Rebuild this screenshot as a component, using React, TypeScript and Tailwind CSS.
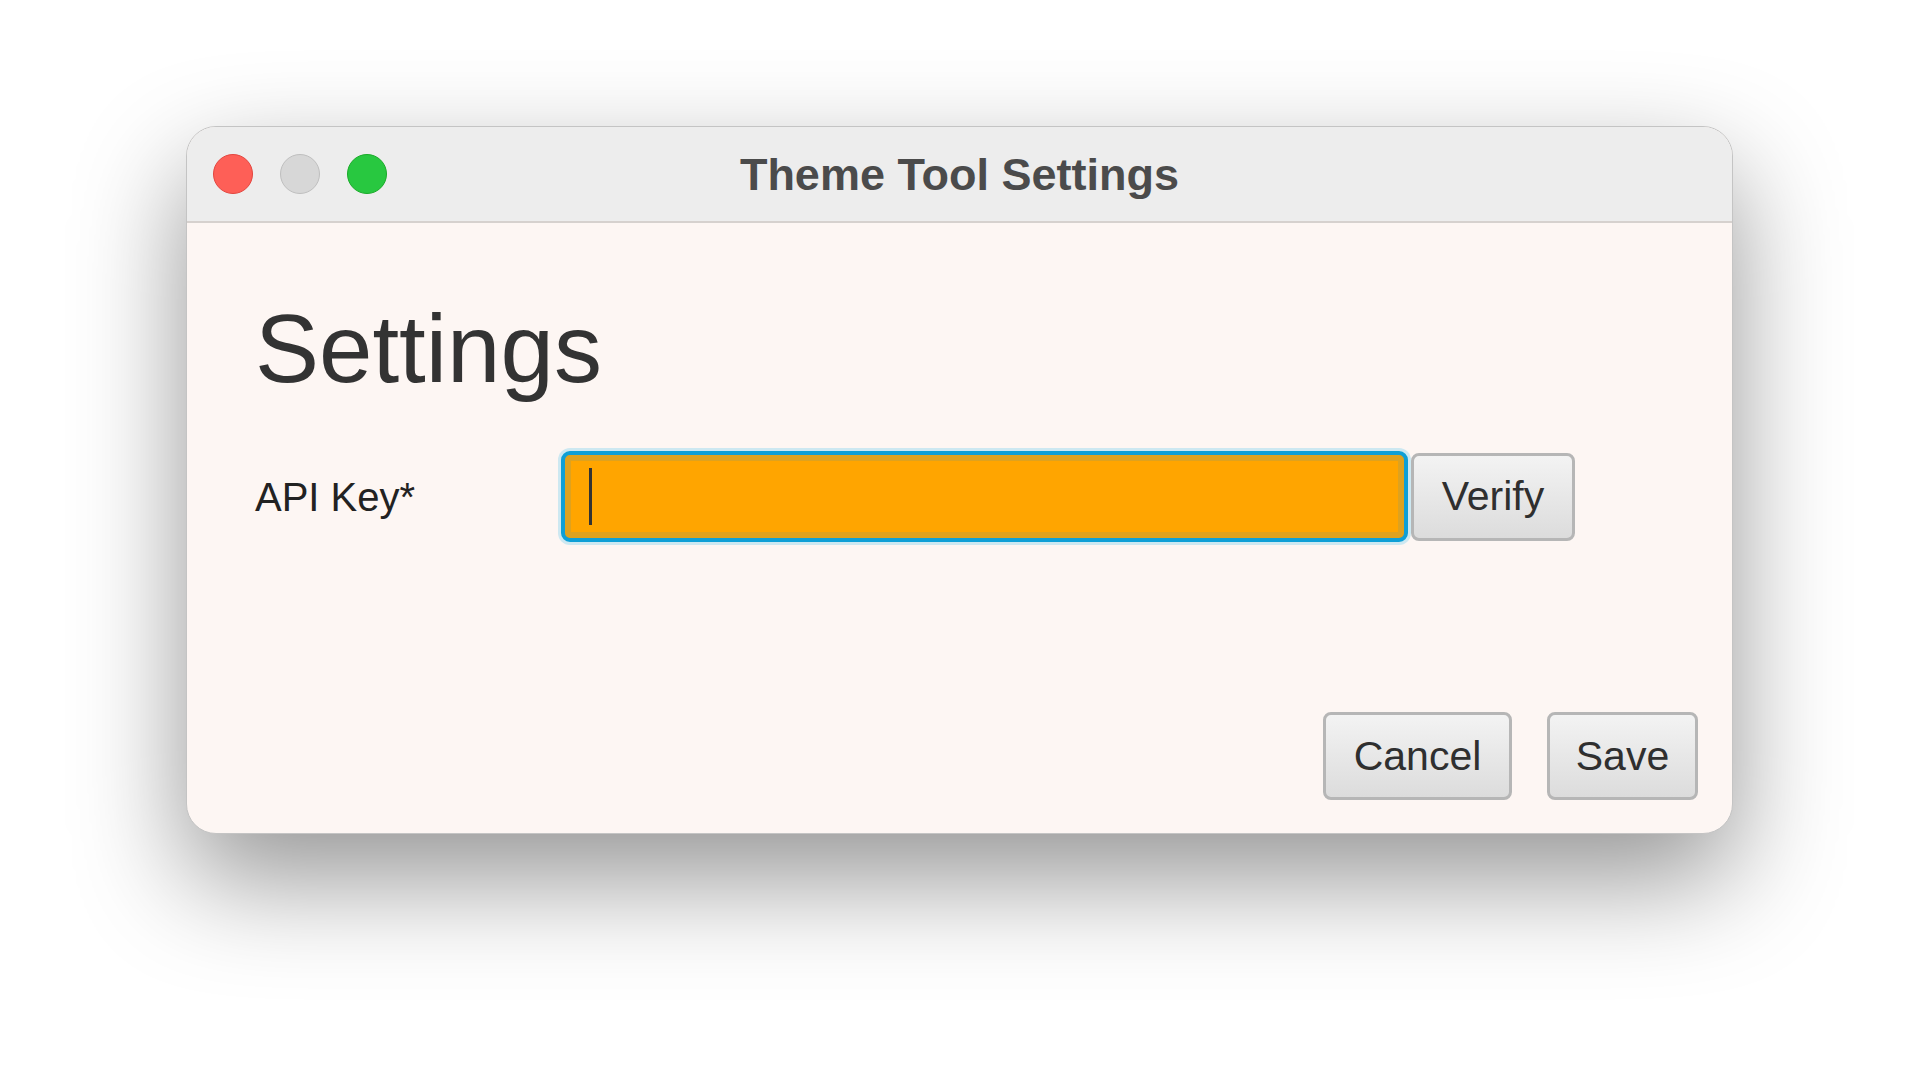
import React from "react";

export default function App() {
  const font = { fontFamily: '"Liberation Sans", Arial, Helvetica, sans-serif' };
  return (
    <div className="w-[1920px] h-[1082px] bg-white overflow-hidden pl-[186px] pt-[126px]" style={font}>
      <div className="w-[1547px] h-[708px] rounded-[30px] overflow-hidden flex flex-col bg-[#fdf6f3] border border-[#c4c4c4] shadow-[0_45px_110px_rgba(0,0,0,0.42)]">
        {/* Title bar */}
        <div className="relative h-[96px] shrink-0 bg-[#ededed] border-b-2 border-[#d6d1ce] flex items-center">
          <div className="flex items-center gap-[27px] pl-[26px]">
            <div className="w-[40px] h-[40px] rounded-full bg-[#fe5f57] border border-[#e2463f]" />
            <div className="w-[40px] h-[40px] rounded-full bg-[#d7d7d7] border border-[#bfbfbf]" />
            <div className="w-[40px] h-[40px] rounded-full bg-[#28c840] border border-[#1aab29]" />
          </div>
          <div className="absolute inset-0 flex items-center justify-center pointer-events-none">
            <span className="text-[45px] font-bold text-[#4b4b4b] leading-none">Theme Tool Settings</span>
          </div>
        </div>
        {/* Body */}
        <div className="flex-1 flex flex-col pl-[68px] pr-[34px] pt-[78px] pb-[33px]">
          <h1 className="text-[96px] leading-none text-[#333333] font-normal">Settings</h1>
          <div className="mt-[54px] flex items-center">
            <div className="w-[306px] text-[40px] text-[#222222] leading-none">API Key*</div>
            <div className="w-[847px] h-[91px] rounded-[9px] border-[4px] border-[#0e9fd6] bg-[#ffa500] shadow-[0_0_0_3px_#cde8f1,inset_0_0_0_6px_#dea21f] flex items-center pl-[24px]">
              <div className="w-[3px] h-[57px] bg-[#333333]" />
            </div>
            <button className="ml-[3px] w-[164px] h-[88px] rounded-[8px] border-[3px] border-[#b6b6b6] bg-gradient-to-b from-[#f3f3f3] to-[#dcdcdc] text-[41px] text-[#2f2f2f] leading-none flex items-center justify-center">
              Verify
            </button>
          </div>
          <div className="mt-auto flex justify-end gap-[35px]">
            <button className="w-[189px] h-[88px] rounded-[8px] border-[3px] border-[#b6b6b6] bg-gradient-to-b from-[#f3f3f3] to-[#dcdcdc] text-[41px] text-[#2f2f2f] leading-none flex items-center justify-center">
              Cancel
            </button>
            <button className="w-[151px] h-[88px] rounded-[8px] border-[3px] border-[#b6b6b6] bg-gradient-to-b from-[#f3f3f3] to-[#dcdcdc] text-[41px] text-[#2f2f2f] leading-none flex items-center justify-center">
              Save
            </button>
          </div>
        </div>
      </div>
    </div>
  );
}
